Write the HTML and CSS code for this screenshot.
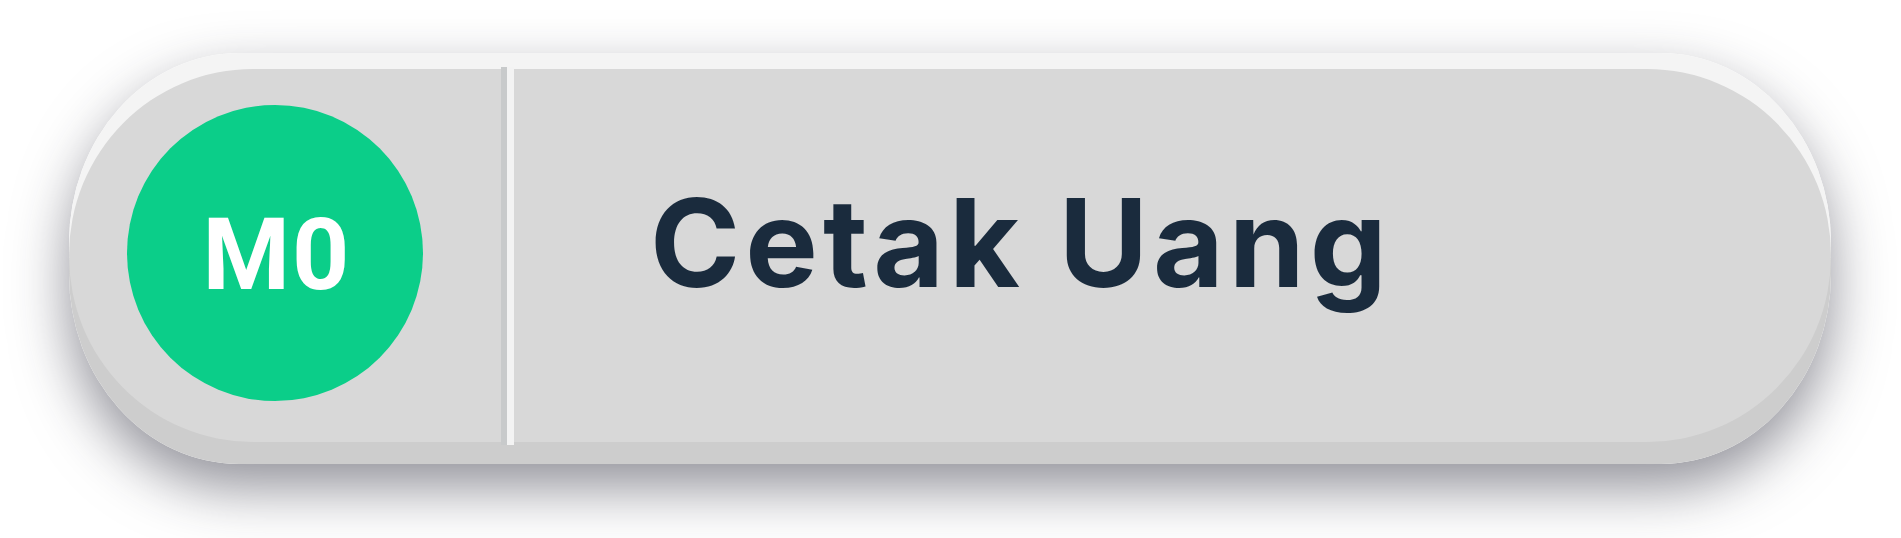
FILE: index.html
```html
<!DOCTYPE html>
<html>
<head>
<meta charset="utf-8">
<link rel="stylesheet" href="styles.css">
</head>
<body>
<div class="stage">
  <div class="pill">
    <div class="face">
      <div class="badge"><span class="badge-text">M0</span></div>
      <div class="divider"><span class="div-dark"></span><span class="div-light"></span></div>
      <div class="label">Cetak Uang</div>
    </div>
  </div>
</div>
</body>
</html>
```
FILE: styles.css
```css
html, body {
  margin: 0;
  padding: 0;
  background: #ffffff;
}
.stage {
  width: 1901px;
  height: 538px;
  padding: 53px 0 0 69px;
  box-sizing: border-box;
}
.pill {
  width: 1762px;
  height: 411px;
  border-radius: 170px / 190px;
  background: linear-gradient(to bottom, #f4f4f4 0, #f4f4f4 50%, #cdcdcd 50%, #cdcdcd 100%);
  box-shadow: 0 24px 55px rgba(40, 40, 55, 0.5);
  padding-top: 16px;
  box-sizing: border-box;
}
.face {
  height: 373px;
  border-radius: 184px / 186px;
  background: #d8d8d8;
  display: flex;
  align-items: center;
}
.badge {
  width: 296px;
  height: 296px;
  margin-left: 58px;
  margin-top: -5px;
  border-radius: 50%;
  background: #0bce89;
  display: flex;
  align-items: center;
  justify-content: center;
  flex-shrink: 0;
}
.badge-text {
  font-family: "Roboto", "Liberation Sans", sans-serif;
  font-weight: 700;
  font-size: 100px;
  line-height: 1;
  color: #ffffff;
  letter-spacing: 2px;
  margin-left: 4px;
  margin-top: 4px;
}
.divider {
  align-self: stretch;
  margin: -2px 0 -3px 78px;
  display: flex;
  flex-shrink: 0;
}
.div-dark {
  width: 6px;
  background: #c8cacb;
}
.div-light {
  width: 7px;
  background: #f3f3f3;
}
.label {
  margin-left: 136px;
  margin-top: -26px;
  font-family: "Inter", "Noto Sans", sans-serif;
  font-weight: 700;
  font-size: 122px;
  line-height: 1;
  color: #1a2b3d;
  letter-spacing: 5px;
}
```
